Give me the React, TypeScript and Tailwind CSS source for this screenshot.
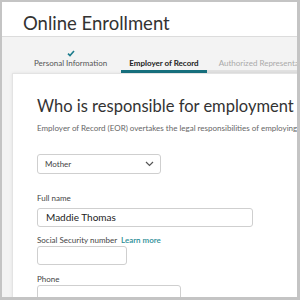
import React from 'react';

const font = { fontFamily: 'Lato, "Open Sans", "Liberation Sans", sans-serif' };

export default function App() {
  return (
    <div
      className="w-[300px] h-[300px] overflow-hidden border-t-2 border-l-2 border-r-[3px] border-b-[3px] border-[#c4c4c4] bg-[#f3f3f3] flex flex-col"
      style={font}
    >
      <div className="h-[35px] shrink-0 bg-white border-b border-[#dcdcdc] pl-[21px] pt-[10px]">
        <h1 className="text-[18.5px] leading-[22px] text-[#333]">Online Enrollment</h1>
      </div>

      <div className="h-[36px] shrink-0 flex items-end pl-[23px] whitespace-nowrap">
        <div className="relative px-[9px] pb-[4px] text-[8px] leading-[11px] text-[#555]">
          <svg className="absolute left-1/2 -translate-x-1/2 -top-[8px]" width="8" height="7" viewBox="0 0 8 7">
            <path d="M1 3.6 L3 5.6 L7 1" fill="none" stroke="#1c7c8c" strokeWidth="1.6" />
          </svg>
          Personal Information
        </div>
        <div className="ml-[5px] px-[8px] pb-[1px] border-b-[3px] border-[#17717f] text-[8px] leading-[11px] font-bold text-[#222]">
          Employer of Record
        </div>
        <div className="flex-1 pl-[12px] pb-[1px] border-b-[3px] border-[#e2e2e2] text-[8px] leading-[11px] text-[#aaa] overflow-hidden">
          Authorized Representative
        </div>
      </div>

      <div className="flex-1 ml-[10px] w-[320px] bg-white border border-[#e3e3e3] shadow-[0_0_3px_rgba(0,0,0,0.08)] pl-[24px] pt-[21px] whitespace-nowrap">
        <h2 className="text-[16.5px] leading-[22px] text-[#333]">Who is responsible for employment tasks?</h2>
        <p className="text-[8px] leading-[10px] mt-[6px] text-[#666]">
          Employer of Record (EOR) overtakes the legal responsibilities of employing your caregiver.
        </p>

        <div className="mt-[21px] w-[124px] h-[20px] border border-[#cfcfcf] rounded-[3px] flex items-center justify-between pl-[7px] pr-[6px]">
          <span className="text-[8px] text-[#444]">Mother</span>
          <svg width="9" height="6" viewBox="0 0 9 6">
            <path d="M1 1 L4.5 4.5 L8 1" fill="none" stroke="#555" strokeWidth="1.2" />
          </svg>
        </div>

        <div className="mt-[19px] text-[8px] leading-[10px] text-[#444]">Full name</div>
        <div className="mt-[5px] w-[216px] h-[19px] border border-[#cfcfcf] rounded-[3px] flex items-center pl-[8px] text-[10px] text-[#222]">
          Maddie Thomas
        </div>

        <div className="mt-[8px] text-[8px] leading-[10px] text-[#444]">
          Social Security number <span className="ml-[2px] text-[#2a8d96] font-semibold">Learn more</span>
        </div>
        <div className="mt-[1px] w-[90px] h-[19px] border border-[#cfcfcf] rounded-[3px]" />

        <div className="mt-[9px] text-[8px] leading-[10px] text-[#444]">Phone</div>
        <div className="mt-[1px] w-[144px] h-[19px] border border-[#cfcfcf] rounded-[3px]" />
      </div>
    </div>
  );
}
